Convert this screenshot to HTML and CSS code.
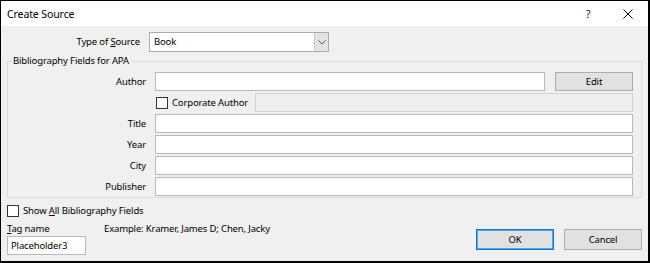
FILE: index.html
```html
<!DOCTYPE html>
<html lang="en">
<head>
  <meta charset="UTF-8">
  <title>Create Source</title>
  <link rel="stylesheet" href="styles.css">
</head>
<body>
  <div class="dialog">
    <div class="titlebar">
      <span class="title">Create Source</span>
      <span class="caption-btn help">?</span>
      <span class="caption-btn close">
        <svg width="10" height="10" viewBox="0 0 10 10">
          <path d="M0.5 0.5 L9.5 9.5 M9.5 0.5 L0.5 9.5" stroke="#000" stroke-width="1" fill="none"/>
        </svg>
      </span>
    </div>

    <div class="content">
      <div class="source-row">
        <label class="source-label">Type of <u>S</u>ource</label>
        <div class="select">
          <span class="select-value">Book</span>
          <span class="select-arrow">
            <svg width="8" height="5" viewBox="0 0 8 5">
              <path d="M0.5 0.5 L4 4 L7.5 0.5" stroke="#555" stroke-width="1" fill="none"/>
            </svg>
          </span>
        </div>
      </div>

      <fieldset class="group">
        <legend>Bibliography Fields for APA</legend>
        <div class="fields">
          <label class="field-label">Author</label>
          <div class="field-line">
            <div class="textbox grow"></div>
            <div class="button edit-btn">Edit</div>
          </div>

          <div></div>
          <div class="field-line">
            <span class="checkbox"></span>
            <span class="check-text">Corporate Author</span>
            <div class="textbox disabled corp-box"></div>
          </div>

          <label class="field-label">Title</label>
          <div class="textbox"></div>

          <label class="field-label">Year</label>
          <div class="textbox"></div>

          <label class="field-label">City</label>
          <div class="textbox"></div>

          <label class="field-label">Publisher</label>
          <div class="textbox"></div>
        </div>
      </fieldset>

      <div class="show-all">
        <span class="checkbox"></span>
        <span class="check-text">Show <u>A</u>ll Bibliography Fields</span>
      </div>

      <div class="bottom-row">
        <div class="tag-col">
          <label class="tag-label"><u>T</u>ag name</label>
          <div class="textbox tag-box">Placeholder3</div>
        </div>
        <div class="example">Example: Kramer, James D; Chen, Jacky</div>
        <div class="actions">
          <div class="button ok-btn">OK</div>
          <div class="button">Cancel</div>
        </div>
      </div>
    </div>
  </div>
</body>
</html>
```

FILE: styles.css
```css
* {
  margin: 0;
  padding: 0;
  box-sizing: border-box;
}

body {
  font-family: 'Noto Sans', sans-serif;
  font-size: 9.5px;
  line-height: 14px;
  letter-spacing: -0.15px;
  color: #000;
  background-color: #000;
}

.dialog {
  width: 650px;
  height: 263px;
  border: solid #000;
  border-width: 1px 2px 2px 1px;
  background-color: #f0f0f0;
  display: flex;
  flex-direction: column;
}

.titlebar {
  height: 25px;
  background-color: white;
  display: flex;
  align-items: center;
  padding-left: 6px;
}

.title {
  flex: 1;
  font-size: 10.5px;
  letter-spacing: -0.1px;
}

.caption-btn {
  height: 25px;
  display: flex;
  align-items: center;
  justify-content: center;
}

.help {
  width: 38px;
  font-size: 11px;
  color: #222;
}

.close {
  width: 41px;
}

.content {
  flex: 1;
  padding: 6px 6px 0 6px;
}

.source-row {
  display: flex;
  align-items: center;
  gap: 9px;
}

.source-label {
  width: 133px;
  text-align: right;
}

.select {
  width: 180px;
  height: 20px;
  border: 1px solid #acacac;
  background-color: white;
  display: flex;
  align-items: center;
}

.select-value {
  flex: 1;
  padding-left: 4px;
}

.select-arrow {
  width: 14px;
  height: 18px;
  background-color: #e3e3e3;
  border-left: 1px solid #c8c8c8;
  display: flex;
  align-items: center;
  justify-content: center;
}

.group {
  margin-top: 2px;
  border: 1px solid #dcdcdc;
  padding: 0 8px 1px 0;
}

.group legend {
  margin-left: 4px;
  padding: 0 1px;
}

.fields {
  display: grid;
  grid-template-columns: 138px 1fr;
  column-gap: 9px;
  row-gap: 2px;
  align-items: center;
  padding-top: 4px;
}

.field-label {
  text-align: right;
}

.field-line {
  display: flex;
  align-items: center;
}

.textbox {
  height: 19px;
  border: 1px solid #b9b9b9;
  background-color: white;
  padding-left: 3px;
  line-height: 17px;
}

.grow {
  flex: 1;
}

.textbox.disabled {
  background-color: #efefef;
  border-color: #d2d2d2;
}

.corp-box {
  margin-left: auto;
  width: 378px;
}

.checkbox {
  width: 12px;
  height: 12px;
  border: 1px solid #333;
  background-color: white;
  margin-left: 1px;
}

.check-text {
  margin-left: 4px;
}

.button {
  height: 19px;
  width: 78px;
  border: 1px solid #adadad;
  background-color: #e1e1e1;
  display: flex;
  align-items: center;
  justify-content: center;
}

.edit-btn {
  margin-left: 10px;
}

.show-all {
  display: flex;
  align-items: center;
  margin-top: 6px;
}

.show-all .checkbox {
  margin-left: 0;
}

.bottom-row {
  display: flex;
  align-items: flex-start;
  margin-top: 4px;
}

.tag-col {
  width: 79px;
}

.tag-label {
  display: block;
  height: 14px;
}

.example {
  margin-left: 18px;
}

.actions {
  margin-left: auto;
  margin-top: 7px;
  display: flex;
  gap: 10px;
}

.actions .button {
  height: 21px;
}

.ok-btn {
  border-color: #0078d7;
  box-shadow: inset 0 0 0 1px #5ba3e6;
}
```
